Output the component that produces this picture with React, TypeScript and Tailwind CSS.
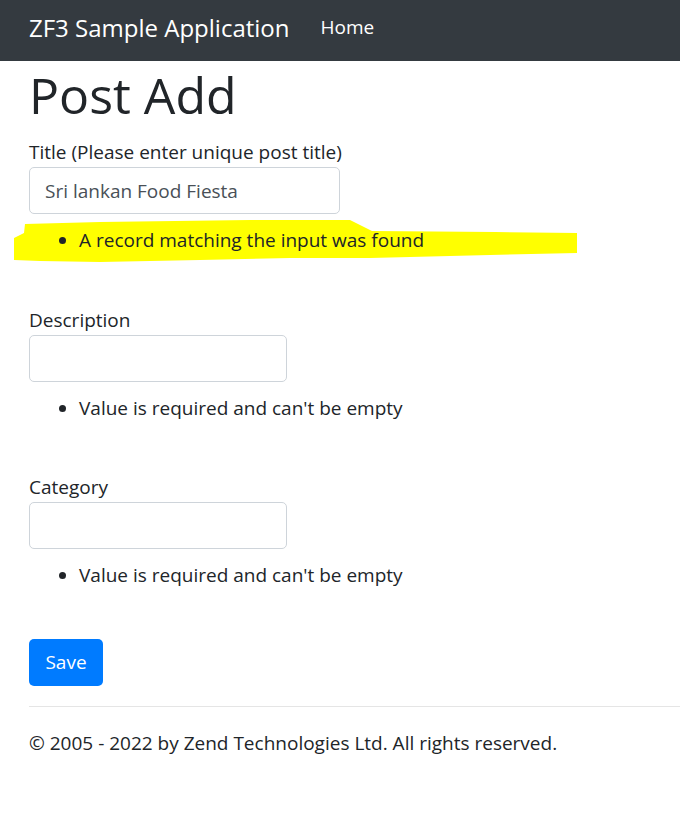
import React from 'react';

const font = { fontFamily: '"Open Sans", "Noto Sans", sans-serif' };

const ErrorList: React.FC<{ message: string }> = ({ message }) => (
  <ul className="list-disc pl-[50px] mt-[11px] text-[19px] leading-[30px] text-[#212529]">
    <li>{message}</li>
  </ul>
);

const App: React.FC = () => {
  return (
    <div className="min-h-[814px] bg-white text-[#212529]" style={font}>
      <nav className="h-[61px] bg-[#343a40] flex items-center pl-[29px] pb-[6px]">
        <a className="text-[24px] text-white leading-none">ZF3 Sample Application</a>
        <a className="ml-[31px] text-[19px] text-white leading-none">Home</a>
      </nav>

      <main className="px-[29px]">
        <h1 className="text-[50px] font-medium leading-[60px] mt-[4px]">Post Add</h1>

        <form onSubmit={(e) => e.preventDefault()}>
          <div className="relative pt-[12px]">
            <label className="block text-[19px] leading-[30px]">Title (Please enter unique post title)</label>
            <input
              className="block w-[311px] h-[47px] border border-[#ced4da] rounded-[5px] px-[15px] text-[19px] text-[#495057] outline-none"
              defaultValue="Sri lankan Food Fiesta"
              style={font}
            />
            <svg
              className="absolute left-[-29px] top-[93px] pointer-events-none"
              width="600"
              height="50"
              viewBox="0 0 600 50"
            >
              <path
                d="M25 6 L100 4 L250 2 L350 2 L372 13 L495 14 L577 15 L577 35 L490 37 L370 40 L290 40 L200 42 L100 44 L40 43 L14 42 L14 20 L24 15 Z"
                fill="#ffff00"
              />
            </svg>
            <div className="relative">
              <ErrorList message="A record matching the input was found" />
            </div>
          </div>

          <div className="mt-[50px]">
            <label className="block text-[19px] leading-[30px]">Description</label>
            <input className="block w-[258px] h-[47px] border border-[#ced4da] rounded-[5px] px-[15px] outline-none" />
            <ErrorList message="Value is required and can't be empty" />
          </div>

          <div className="mt-[49px]">
            <label className="block text-[19px] leading-[30px]">Category</label>
            <input className="block w-[258px] h-[47px] border border-[#ced4da] rounded-[5px] px-[15px] outline-none" />
            <ErrorList message="Value is required and can't be empty" />
          </div>

          <button
            type="submit"
            className="mt-[49px] w-[74px] h-[47px] bg-[#007bff] text-white text-[19px] rounded-[5px]"
            style={font}
          >
            Save
          </button>
        </form>

        <hr className="mt-[20px] mr-[-29px] border-t border-[#e5e5e5]" />
        <p className="mt-[21px] text-[19px] leading-[30px]">© 2005 - 2022 by Zend Technologies Ltd. All rights reserved.</p>
      </main>
    </div>
  );
};

export default App;
